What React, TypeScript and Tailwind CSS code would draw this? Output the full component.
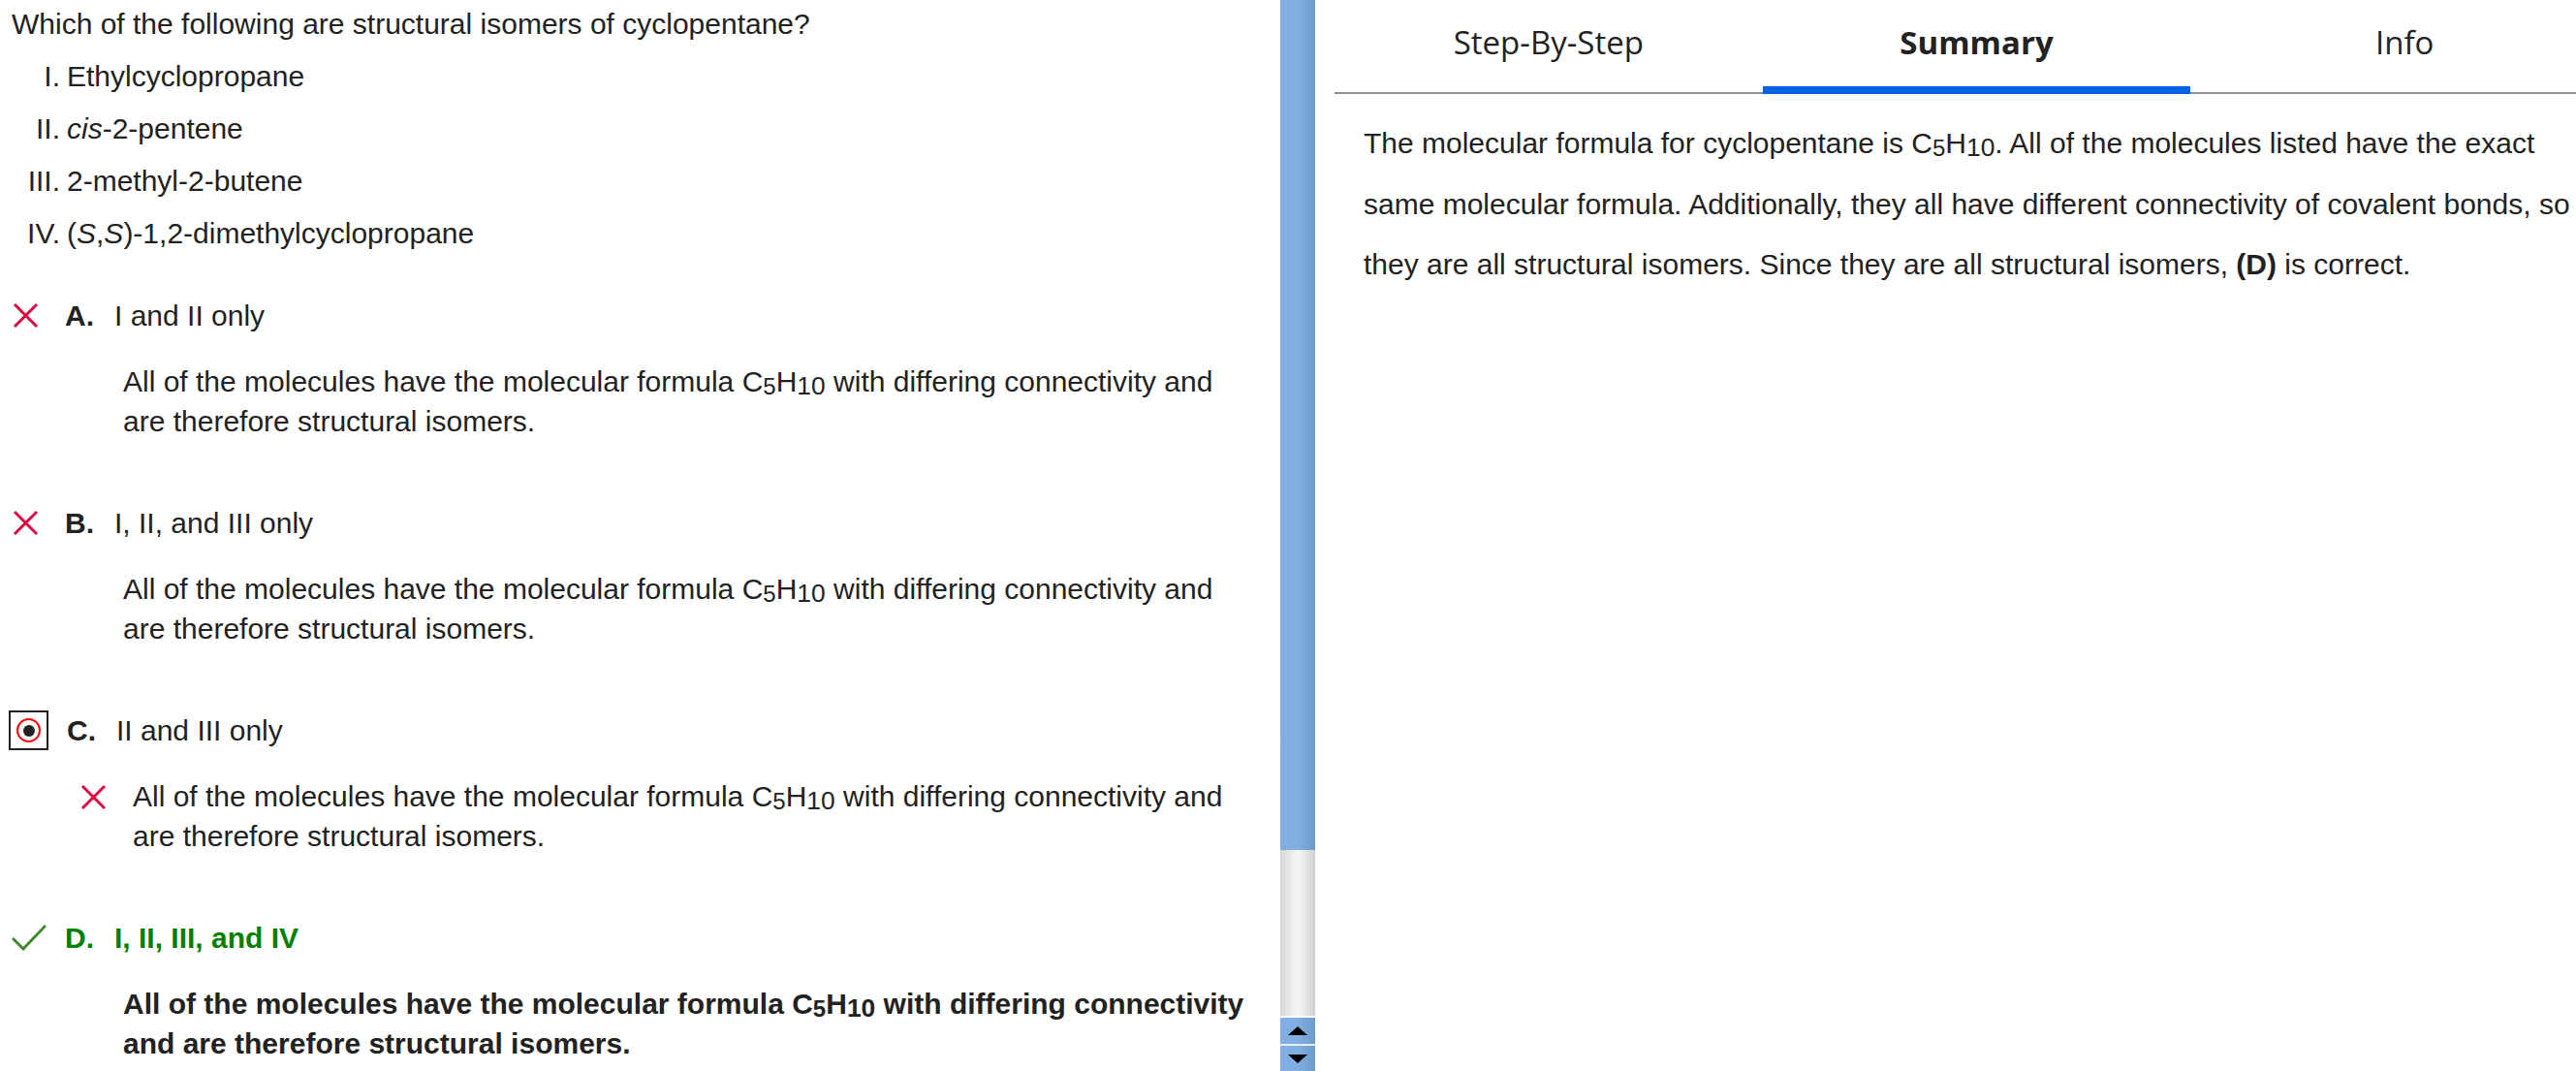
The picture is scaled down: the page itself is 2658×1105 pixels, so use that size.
const C5H10 = () => (
  <span>
    C<sub className="relative top-[3px] text-[0.8em]">5</sub>H<sub className="relative top-[3px] text-[0.88em]">10</sub>
  </span>
);

const RedX = ({ className }: { className?: string }) => (
  <svg viewBox="0 0 27 27" className={className} width={27} height={27}>
    <path d="M2 2 L25 25 M25 2 L2 25" stroke="#d9063f" strokeWidth={3} fill="none" />
  </svg>
);

const Check = () => (
  <svg viewBox="0 0 36 27" width={36} height={27}>
    <path d="M1 14 L12 25 L35 1" stroke="#3f8a2f" strokeWidth={3} fill="none" />
  </svg>
);

const Explanation = () => (
  <>
    All of the molecules have the molecular formula <C5H10 /> with differing connectivity and are therefore
    structural isomers.
  </>
);

const Option = ({
  letter,
  text,
  mark,
  first,
}: {
  letter: string;
  text: string;
  mark: 'x' | 'radio' | 'check';
  first?: boolean;
}) => {
  const correct = mark === 'check';
  return (
    <div className={first ? 'mt-[44px]' : 'mt-[64px]'}>
      <div className={`flex items-center h-[41px] ${correct ? 'text-[#008000] font-bold' : ''}`}>
        <div className="w-[67px] h-[41px] flex items-center">
          {mark === 'x' && <RedX className="ml-[13px]" />}
          {mark === 'check' && (
            <div className="ml-[12px] flex">
              <Check />
            </div>
          )}
          {mark === 'radio' && (
            <div className="ml-[9px] w-[41px] h-[41px] border-2 border-[#222] flex items-center justify-center">
              <div className="w-[25px] h-[25px] rounded-full border-2 border-[#f00] flex items-center justify-center">
                <div className="w-[12px] h-[12px] rounded-full bg-[#222]" />
              </div>
            </div>
          )}
        </div>
        <span className={`font-bold w-[51px] ${mark === 'radio' ? 'ml-[2px]' : ''}`}>{letter}.</span>
        <span>{text}</span>
      </div>
      {mark === 'radio' ? (
        <div className="mt-[27px] flex items-start">
          <RedX className="ml-[83px] mt-[8px] shrink-0" />
          <p className="ml-[27px] w-[1158px]">
            <Explanation />
          </p>
        </div>
      ) : (
        <p className={`mt-[27px] ml-[127px] w-[1168px] ${correct ? 'font-bold' : ''}`}>
          <Explanation />
        </p>
      )}
    </div>
  );
};

const Scrollbar = () => (
  <div className="w-[36px] h-full flex flex-col shrink-0">
    <div className="h-[877px] bg-gradient-to-r from-[#82afe1] via-[#82afe1] to-[#6c9ac9]" />
    <div className="h-[171px] bg-gradient-to-r from-[#d6d6d6] via-[#f7f7f7] to-[#cfcfcf]" />
    <div className="h-[2px] bg-white" />
    <div className="h-[27px] bg-gradient-to-r from-[#82afe1] via-[#82afe1] to-[#6c9ac9] flex items-center justify-center">
      <div className="w-0 h-0 border-l-[10px] border-r-[10px] border-b-[9px] border-l-transparent border-r-transparent border-b-black" />
    </div>
    <div className="h-[2px] bg-[#e8eef5]" />
    <div className="flex-1 bg-gradient-to-r from-[#82afe1] via-[#82afe1] to-[#6c9ac9] flex items-center justify-center">
      <div className="w-0 h-0 border-l-[10px] border-r-[10px] border-t-[9px] border-l-transparent border-r-transparent border-t-black" />
    </div>
  </div>
);

const Tabs = () => (
  <div className="grid grid-cols-3 w-[1325px] border-b-2 border-[#87929b] font-['Open_Sans',sans-serif] text-[33px] text-[#222]">
    <div className="h-[95px] flex items-center justify-center pb-[8px]">Step-By-Step</div>
    <div className="h-[95px] flex items-center justify-center pb-[8px] relative font-bold">
      Summary
      <div className="absolute left-0 right-0 bottom-[-2px] h-[8px] bg-[#0062e6]" />
    </div>
    <div className="h-[95px] flex items-center justify-center pb-[8px]">Info</div>
  </div>
);

export default function App() {
  return (
    <div className="flex h-[1105px] w-full overflow-hidden bg-white text-[#222] font-['Liberation_Sans',Arial,sans-serif] text-[30px] leading-[41px]">
      <div className="w-[1321px] shrink-0 overflow-hidden">
        <p className="mt-[4px] ml-[12px]">Which of the following are structural isomers of cyclopentane?</p>
        <ol className="ml-[69px]">
          {[
            ['I.', <>Ethylcyclopropane</>],
            ['II.', <><i>cis</i>-2-pentene</>],
            ['III.', <>2-methyl-2-butene</>],
            ['IV.', <>(<i>S</i>,<i>S</i>)-1,2-dimethylcyclopropane</>],
          ].map(([num, body], i) => (
            <li key={i} className="mt-[13px] flex">
              <span className="w-[60px] -ml-[67px] mr-[7px] text-right">{num}</span>
              <span>{body}</span>
            </li>
          ))}
        </ol>
        <Option letter="A" text="I and II only" mark="x" first />
        <Option letter="B" text="I, II, and III only" mark="x" />
        <Option letter="C" text="II and III only" mark="radio" />
        <Option letter="D" text="I, II, III, and IV" mark="check" />
      </div>
      <Scrollbar />
      <div className="flex-1 overflow-hidden">
        <div className="ml-[20px] w-[1325px]">
          <Tabs />
          <p className="mt-[20px] ml-[30px] w-[1275px] leading-[62.5px]">
            The molecular formula for cyclopentane is <C5H10 />. All of the molecules listed have the exact same
            molecular formula. Additionally, they all have different connectivity of covalent bonds, so they are all
            structural isomers. Since they are all structural isomers, <b>(D)</b> is correct.
          </p>
        </div>
      </div>
    </div>
  );
}
